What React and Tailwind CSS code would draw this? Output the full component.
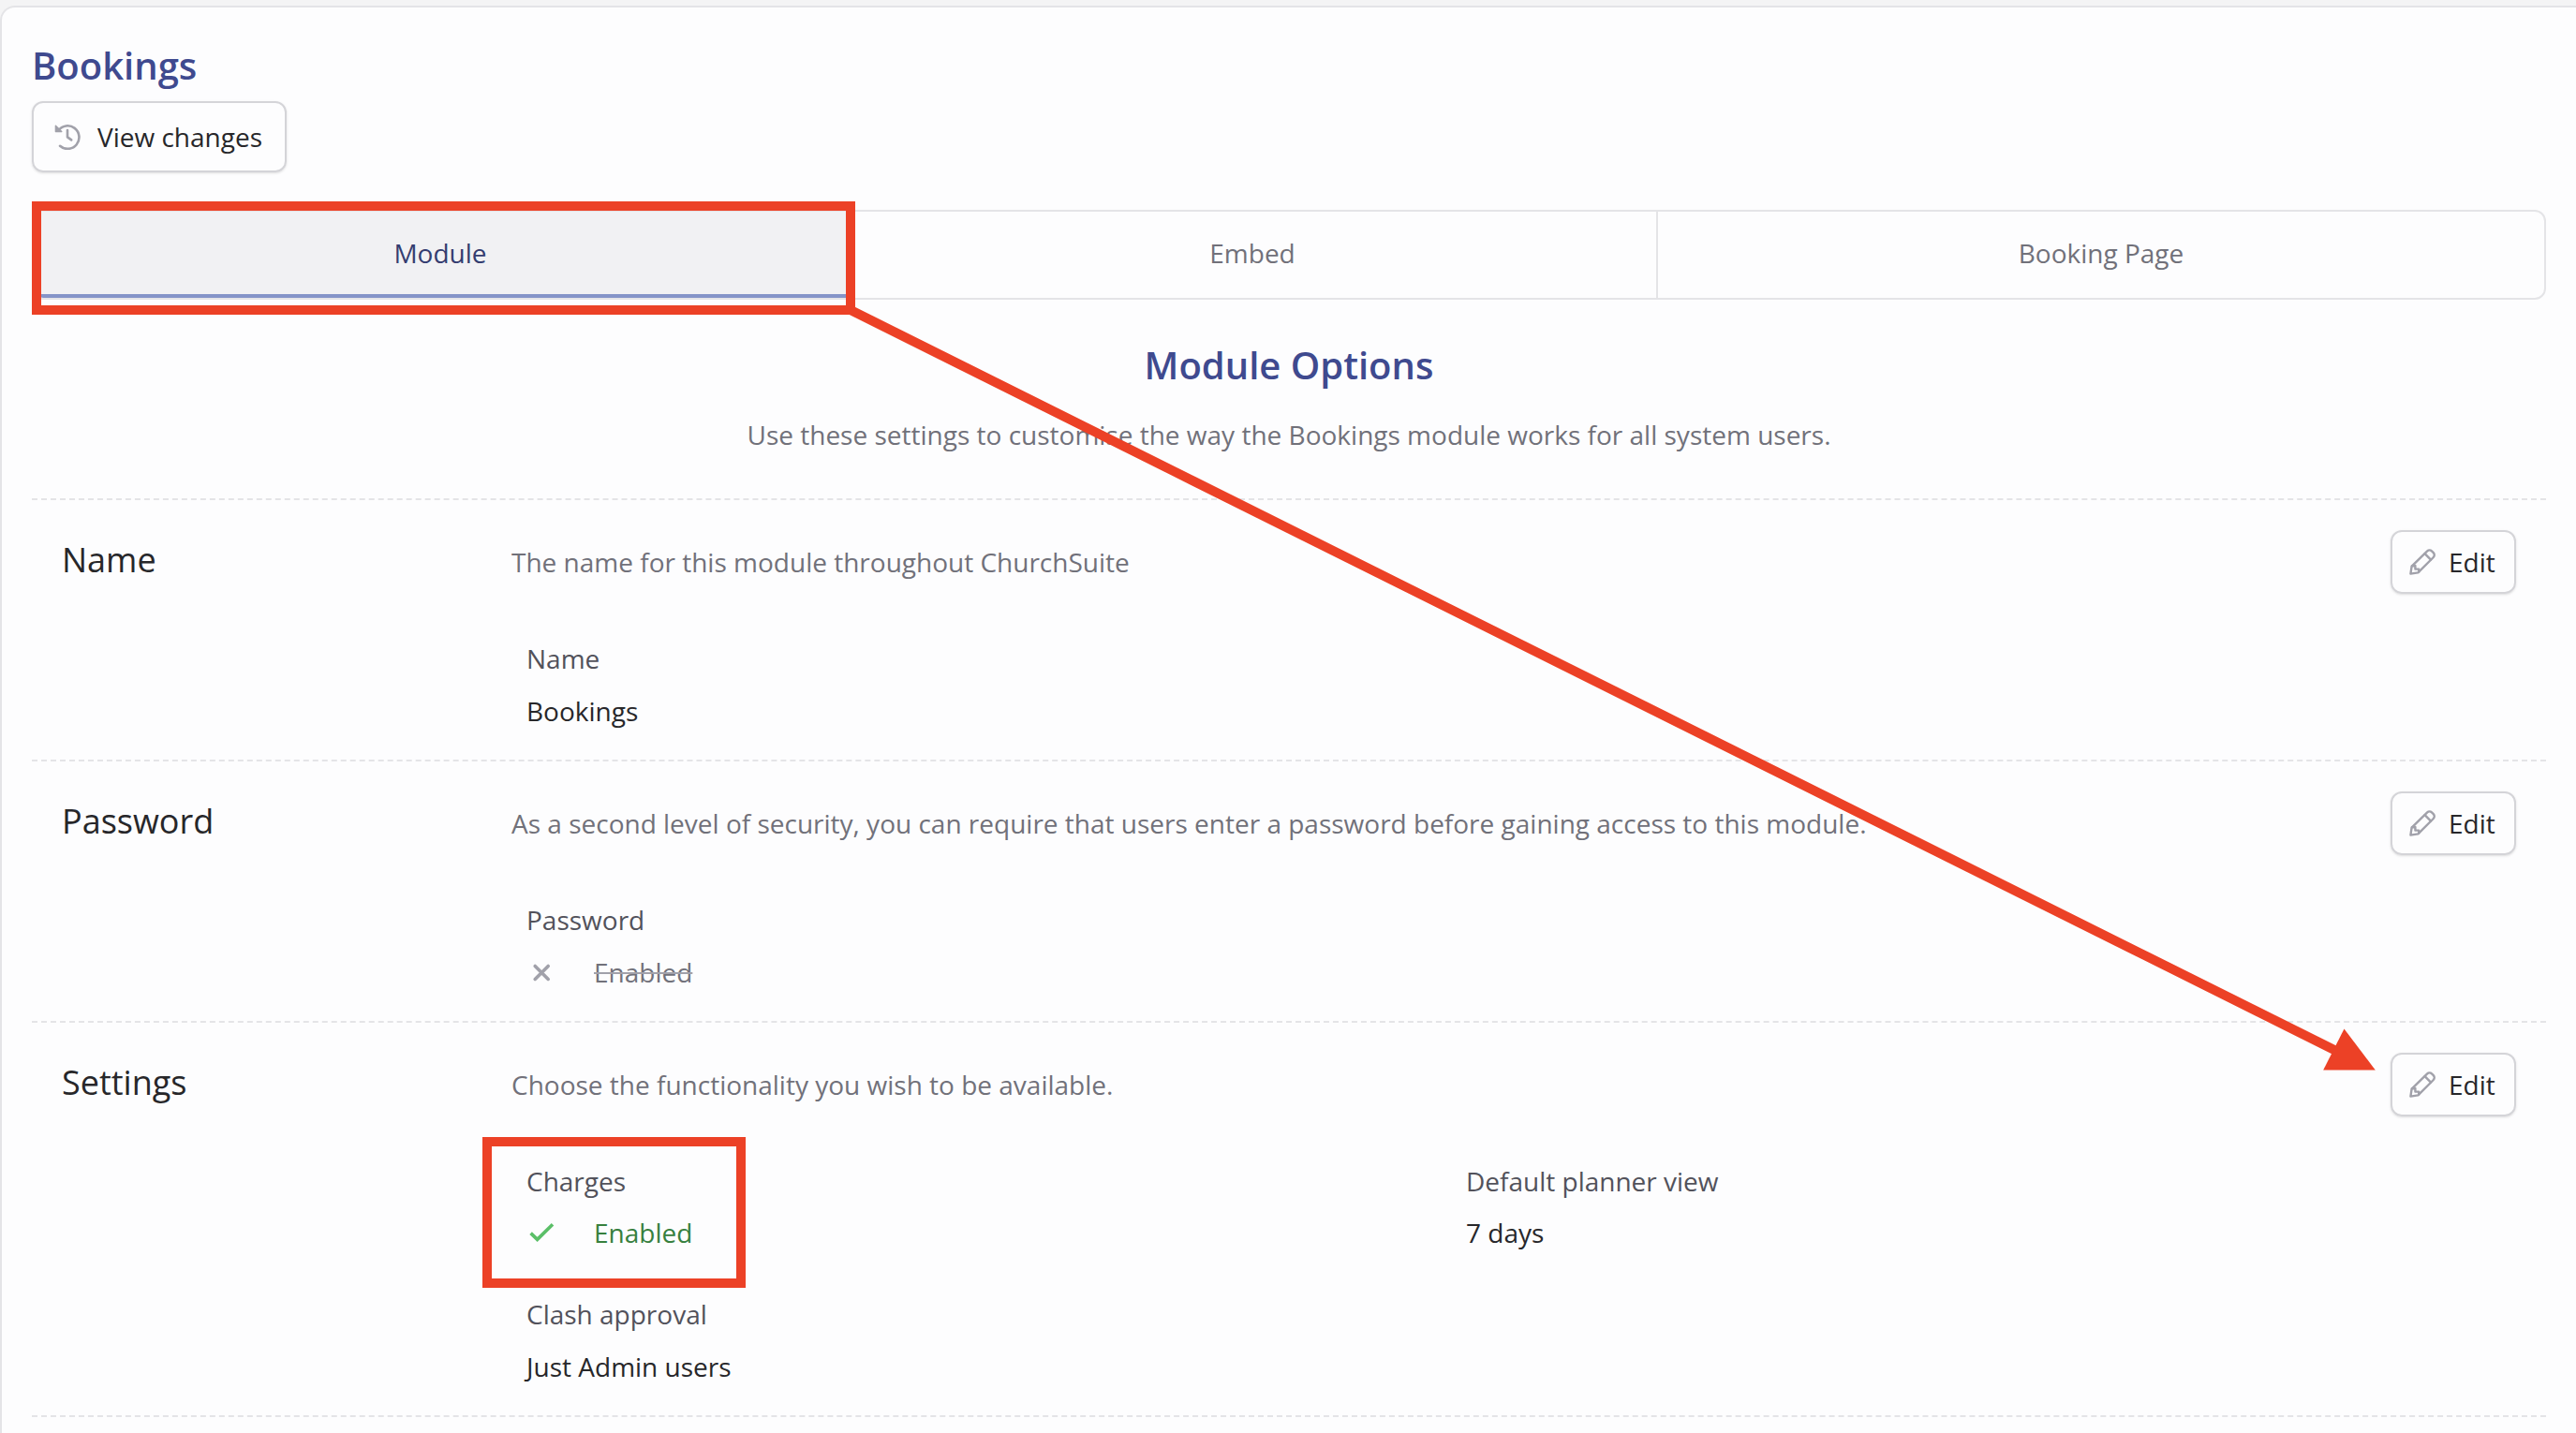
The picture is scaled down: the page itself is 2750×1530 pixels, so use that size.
const HistoryIcon = () => (
    <svg viewBox="0 0 28 28" className="w-7 h-7 shrink-0" fill="none" stroke="#a1a1aa" strokeWidth="2.6" strokeLinecap="round" strokeLinejoin="round">
        <path d="M4.2 7.4A12.3 12.3 0 1 1 6 23.8" />
        <path d="M14 7v7.4l4.2 3" />
        <path d="M1.4 2.2v6.4h6.4z" fill="#a1a1aa" strokeWidth="1.4" />
    </svg>
);

const PencilIcon = () => (
    <svg viewBox="0 0 28 28" className="w-7 h-7 shrink-0" fill="none" stroke="#a1a1aa" strokeWidth="2.4" strokeLinecap="round" strokeLinejoin="round">
        <path d="M1.4 26.6 2.6 18.6 19.2 2.4a3.4 3.4 0 0 1 4.8 0l1.8 1.8a3.4 3.4 0 0 1 0 4.8L9.4 25.4z" />
        <path d="m16.6 5.2 6.4 6.4" />
        <path d="M3 18.2 6.4 18v3.6h3.8v3" />
    </svg>
);

const CrossIcon = () => (
    <svg viewBox="0 0 32 28" className="w-8 h-7 shrink-0" fill="none" stroke="#a1a1aa" strokeWidth="3.6" strokeLinecap="round">
        <path d="m9.2 7.4 14 14M23.2 7.4l-14 14" />
    </svg>
);

const CheckIcon = () => (
    <svg viewBox="0 0 32 28" className="w-8 h-7 shrink-0" fill="none" stroke="#5bbf68" strokeWidth="3.6">
        <path d="m4.6 14.6 7 6.8L28 5.2" />
    </svg>
);

const Field = ({ label, compact, children }) => (
    <div className="h-[142px] leading-[56px]">
        <div className={compact ? 'h-[55px] text-[#52525b]' : 'h-[56px] text-[#52525b]'}>{label}</div>
        <div className="h-[56px] font-medium text-[#27272a]">{children}</div>
    </div>
);

const Section = ({ title, description, children }) => (
    <section className="border-t-2 border-dashed border-[#e4e4e7] pl-8 pr-8 pt-8">
        <div className="flex items-start">
            <h3 className="w-[480px] shrink-0 text-4xl leading-[64px] text-[#27272a]">{title}</h3>
            <div className="grow">
                <p className="leading-[68px] text-[#71717a]">{description}</p>
            </div>
            <button className="flex h-[68px] w-[134px] items-center gap-[14px] rounded-xl border-2 border-[#d4d4d8] pl-[18px] font-medium text-[#27272a] shadow-sm">
                <PencilIcon />
                Edit
            </button>
        </div>
        <div className="-mb-[6px] ml-[496px] mt-[41px] grid grid-cols-[1003px_1fr]">
            {children}
        </div>
    </section>
);

const App = () => {
    return (
        <div className="relative h-[1530px] w-[2750px] overflow-hidden bg-[#f4f4f5] pt-1.5 font-['Open_Sans',sans-serif] text-[28px]">
            <div className="h-full rounded-tl-2xl border-l-2 border-t-2 border-[#e4e4e7] bg-[#fdfdfe] pl-8 pr-8 pt-[34px]">
                <h1 className="text-[40px] font-semibold leading-[56px] text-[#3f4a8f]">Bookings</h1>
                <button className="mt-[10px] flex h-[76px] w-[272px] items-center gap-[18px] rounded-xl border-2 border-[#d4d4d8] pl-[22px] font-medium text-[#27272a] shadow-sm">
                    <HistoryIcon />
                    View changes
                </button>

                <nav className="mt-10 flex h-24 overflow-hidden rounded-xl border-2 border-[#e4e4e7] pb-0 text-[#71717a]">
                    <div className="flex w-[870px] items-center justify-center border-b-4 border-r-2 border-b-[#8594c8] border-r-[#e4e4e7] bg-[#f1f1f3] text-[#343d70]">Module</div>
                    <div className="flex w-[864px] items-center justify-center border-r-2 border-[#e4e4e7] pb-1">Embed</div>
                    <div className="flex grow items-center justify-center pb-1">Booking Page</div>
                </nav>

                <div className="h-[212px] pt-[42px] text-center">
                    <h2 className="text-[40px] font-semibold leading-[56px] text-[#3f4a8f]">Module Options</h2>
                    <p className="mt-[25px] leading-[42px] text-[#71717a]">Use these settings to customise the way the Bookings module works for all system users.</p>
                </div>

                <Section title="Name" description="The name for this module throughout ChurchSuite">
                    <Field label="Name">Bookings</Field>
                </Section>
                <Section title="Password" description="As a second level of security, you can require that users enter a password before gaining access to this module.">
                    <Field label="Password">
                        <span className="flex items-center gap-10 text-[#71717a]">
                            <CrossIcon />
                            <span className="line-through decoration-[#a1a1aa] decoration-2">Enabled</span>
                        </span>
                    </Field>
                </Section>
                <Section title="Settings" description="Choose the functionality you wish to be available.">
                    <Field label="Charges" compact>
                        <span className="flex items-center gap-10 text-[#37803e]">
                            <CheckIcon />
                            Enabled
                        </span>
                    </Field>
                    <Field label="Default planner view" compact>7 days</Field>
                    <Field label="Clash approval">Just Admin users</Field>
                </Section>
                <div className="border-t-2 border-dashed border-[#e4e4e7]" />
            </div>

            {/* Callouts */}
            <div className="absolute left-[34px] top-[215px] h-[121px] w-[879px] border-10 border-[#ec4126]" />
            <div className="absolute left-[515px] top-[1214px] h-[161px] w-[281px] border-10 border-[#ec4126]" />
            <svg viewBox="0 0 2750 1530" className="pointer-events-none absolute left-0 top-0 h-[1530px] w-[2750px]">
                <path d="M908 331 2496 1123" stroke="#ec4126" strokeWidth="10" />
                <path d="M2535.8 1142.6 2502.5 1098.5 2480.2 1142.6z" fill="#ec4126" />
            </svg>
        </div>
    );
};

export default App;
